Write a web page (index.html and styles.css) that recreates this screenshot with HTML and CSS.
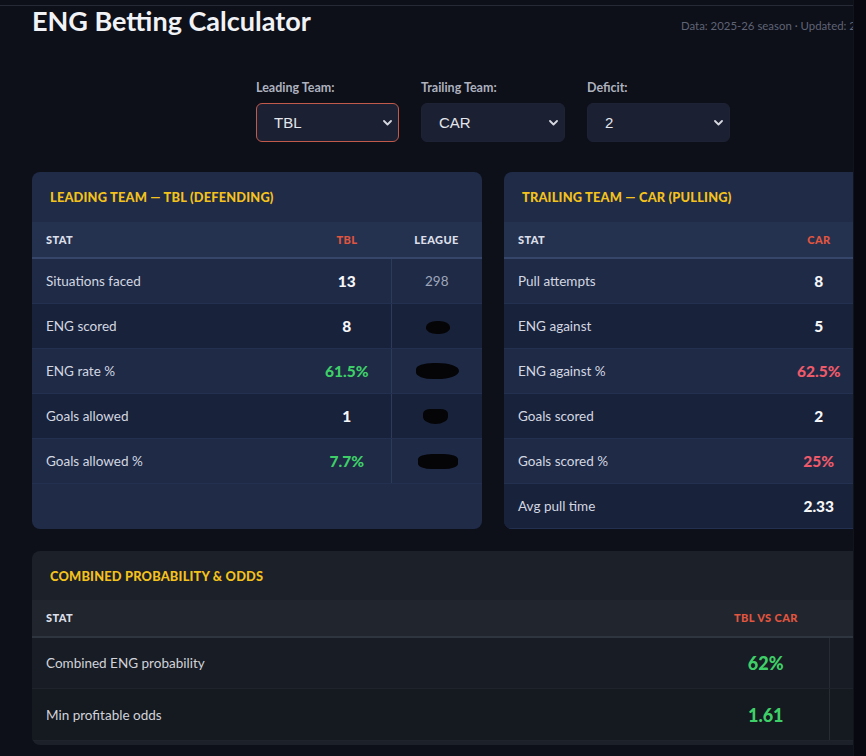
FILE: index.html
```html
<!DOCTYPE html>
<html lang="en">
<head>
<meta charset="utf-8">
<title>ENG Betting Calculator</title>
<link rel="stylesheet" href="styles.css">
</head>
<body>
<div class="viewport">
  <div class="page">
    <header class="header">
      <h1 class="title">ENG Betting Calculator</h1>
      <div class="meta">Data: 2025-26 season · Updated: 2026-01-14</div>
    </header>

    <div class="controls">
      <div class="field">
        <label class="label">Leading Team:</label>
        <div class="select-wrap">
          <select class="select select-active"><option>TBL</option></select>
          <svg class="chev" width="9" height="6" viewBox="0 0 9 6"><polyline points="1,1 4.5,4.5 8,1" fill="none" stroke="#d6d8e0" stroke-width="1.8" stroke-linecap="round" stroke-linejoin="round"/></svg>
        </div>
      </div>
      <div class="field">
        <label class="label">Trailing Team:</label>
        <div class="select-wrap wide">
          <select class="select"><option>CAR</option></select>
          <svg class="chev" width="9" height="6" viewBox="0 0 9 6"><polyline points="1,1 4.5,4.5 8,1" fill="none" stroke="#d6d8e0" stroke-width="1.8" stroke-linecap="round" stroke-linejoin="round"/></svg>
        </div>
      </div>
      <div class="field">
        <label class="label">Deficit:</label>
        <div class="select-wrap">
          <select class="select"><option>2</option></select>
          <svg class="chev" width="9" height="6" viewBox="0 0 9 6"><polyline points="1,1 4.5,4.5 8,1" fill="none" stroke="#d6d8e0" stroke-width="1.8" stroke-linecap="round" stroke-linejoin="round"/></svg>
        </div>
      </div>
    </div>

    <div class="cards">
      <section class="card">
        <h2 class="card-title">Leading Team — TBL (Defending)</h2>
        <table class="stats">
          <colgroup><col class="c-stat"><col class="c-val"><col class="c-league"></colgroup>
          <thead>
            <tr><th class="th-left">Stat</th><th class="th-team">TBL</th><th>League</th></tr>
          </thead>
          <tbody>
            <tr><td class="lbl">Situations faced</td><td class="val">13</td><td class="lg">298</td></tr>
            <tr><td class="lbl">ENG scored</td><td class="val">8</td><td class="lg"><span class="redact r1"></span></td></tr>
            <tr><td class="lbl">ENG rate %</td><td class="val good">61.5%</td><td class="lg"><span class="redact r2"></span></td></tr>
            <tr><td class="lbl">Goals allowed</td><td class="val">1</td><td class="lg"><span class="redact r3"></span></td></tr>
            <tr><td class="lbl">Goals allowed %</td><td class="val good">7.7%</td><td class="lg"><span class="redact r4"></span></td></tr>
          </tbody>
        </table>
      </section>

      <section class="card">
        <h2 class="card-title">Trailing Team — CAR (Pulling)</h2>
        <table class="stats">
          <colgroup><col class="c-stat"><col class="c-val"><col class="c-league"></colgroup>
          <thead>
            <tr><th class="th-left">Stat</th><th class="th-team">CAR</th><th></th></tr>
          </thead>
          <tbody>
            <tr><td class="lbl">Pull attempts</td><td class="val">8</td><td class="lg"></td></tr>
            <tr><td class="lbl">ENG against</td><td class="val">5</td><td class="lg"></td></tr>
            <tr><td class="lbl">ENG against %</td><td class="val bad">62.5%</td><td class="lg"></td></tr>
            <tr><td class="lbl">Goals scored</td><td class="val">2</td><td class="lg"></td></tr>
            <tr><td class="lbl">Goals scored %</td><td class="val bad">25%</td><td class="lg"></td></tr>
            <tr><td class="lbl">Avg pull time</td><td class="val">2.33</td><td class="lg"></td></tr>
          </tbody>
        </table>
      </section>
    </div>

    <section class="card combined">
      <h2 class="card-title">Combined Probability &amp; Odds</h2>
      <table class="stats big">
        <colgroup><col class="c-stat2"><col class="c-val2"><col class="c-extra"></colgroup>
        <thead>
          <tr><th class="th-left">Stat</th><th class="th-team">TBL vs CAR</th><th></th></tr>
        </thead>
        <tbody>
          <tr><td class="lbl">Combined ENG probability</td><td class="val good">62%</td><td class="lg"></td></tr>
          <tr><td class="lbl">Min profitable odds</td><td class="val good">1.61</td><td class="lg"></td></tr>
        </tbody>
      </table>
    </section>
  </div>
</div>
<div class="edge"></div>
</body>
</html>
```
FILE: styles.css
```css
* { box-sizing: border-box; }

html, body {
  margin: 0;
  height: 100%;
}

body {
  display: flex;
  background: #0d0f19;
  font-family: Lato, "Open Sans", sans-serif;
  color: #e8eaf0;
  overflow: hidden;
}

.viewport {
  width: 853px;
  flex: none;
  height: 756px;
  overflow: hidden;
  padding-top: 5px;
}

.edge {
  flex: 1;
  background: #080910;
  border-left: 1px solid #12141d;
}

.page {
  width: 986px;
  padding: 0 32px;
  border-top: 1px solid #262936;
}

.header {
  display: flex;
  align-items: center;
}

.title {
  margin: 0;
  font-size: 27px;
  line-height: 30px;
  font-weight: 700;
  color: #f1f2f5;
  letter-spacing: 0;
}

.meta {
  margin-left: auto;
  width: 273px;
  flex: none;
  white-space: nowrap;
  font-size: 11.4px;
  color: #5f6475;
  padding-top: 8px;
}

.controls {
  display: flex;
  justify-content: center;
  gap: 22px;
  margin-top: 44px;
}

.field {
  display: flex;
  flex-direction: column;
  gap: 7px;
}

.label {
  font-size: 12.5px;
  line-height: 16px;
  font-weight: 700;
  color: #aeb2bf;
}

.select-wrap {
  position: relative;
  width: 143px;
}

.select-wrap.wide { width: 144px; }

.select {
  appearance: none;
  -webkit-appearance: none;
  width: 100%;
  height: 39px;
  padding: 0 28px 0 17px;
  border: 1px solid #1d2234;
  border-radius: 6px;
  background: #1b2033;
  color: #e4e6ec;
  font-family: "Liberation Sans", Arial, sans-serif;
  font-size: 15px;
}

.select-active {
  border: 1.5px solid #c25a4b;
}

.chev {
  position: absolute;
  right: 7px;
  top: 17px;
  pointer-events: none;
}

.cards {
  display: grid;
  grid-template-columns: 1fr 1fr;
  gap: 22px;
  margin-top: 30px;
}

.card {
  background: #1f2b47;
  border-radius: 8px;
  overflow: hidden;
}

.card-title {
  margin: 0;
  height: 50px;
  padding: 17px 18px 0;
  font-size: 12.8px;
  line-height: 16px;
  font-weight: 900;
  text-transform: uppercase;
  letter-spacing: 0.2px;
  color: #f4c21c;
}

.stats {
  width: 100%;
  border-collapse: collapse;
  table-layout: fixed;
}

.c-stat { width: 271px; }
.c-val { width: 88px; }
.c-league { width: 91px; }

.stats th {
  height: 36px;
  background: #243250;
  border-bottom: 2px solid #36456a;
  font-size: 11px;
  font-weight: 900;
  text-transform: uppercase;
  letter-spacing: 0.4px;
  color: #dcdfe8;
  text-align: center;
  padding: 0;
}

.stats .th-left {
  text-align: left;
  padding-left: 14px;
}

.stats .th-team { color: #e2553f; }

.stats td {
  height: 45px;
  padding: 0;
  border-bottom: 1px solid #233050;
}

.stats tbody tr:nth-child(odd) td { background: #1e2a46; }
.stats tbody tr:nth-child(even) td { background: #18223a; }

.lbl {
  padding-left: 14px !important;
  font-size: 13.5px;
  color: #d3d7e1;
}

.val {
  text-align: center;
  font-size: 15.5px;
  font-weight: 900;
  color: #f5f6f8;
}

.val.good { color: #3fcf68; }
.val.bad { color: #ef5a6a; }

.lg {
  text-align: center;
  border-left: 1px solid #2d3b5b;
  font-size: 13.5px;
  color: #9ea6ba;
}

.redact {
  display: inline-block;
  vertical-align: middle;
  background: #050507;
  border-radius: 45%;
}

.r1 { width: 24px; height: 13px; margin-left: 3px; }
.r2 { width: 43px; height: 16px; margin-left: 2px; border-radius: 40% 50% 50% 40%; }
.r3 { width: 25px; height: 15px; margin-left: -3px; border-radius: 30% 30% 50% 50%; }
.r4 { width: 40px; height: 15px; margin-left: 2px; border-radius: 35%; }

.combined {
  margin-top: 22px;
  background: #1b2029;
  padding-bottom: 4px;
}

.combined .card-title {
  height: 49px;
}

.c-stat2 { width: 671px; }
.c-val2 { width: 126px; }
.c-extra { width: 125px; }

.big th {
  height: 37px;
  background: #20252e;
  border-bottom: 2px solid #2f353f;
}

.big td {
  height: 52px;
  border-bottom: 1px solid #1f242c;
}

.big tbody tr:nth-child(odd) td { background: #181c24; }
.big tbody tr:nth-child(even) td { background: #151920; }

.big .lbl { color: #d0d3da; }

.big .val { font-size: 18px; }

.big .lg { border-left: 1px solid #262b34; }
```
